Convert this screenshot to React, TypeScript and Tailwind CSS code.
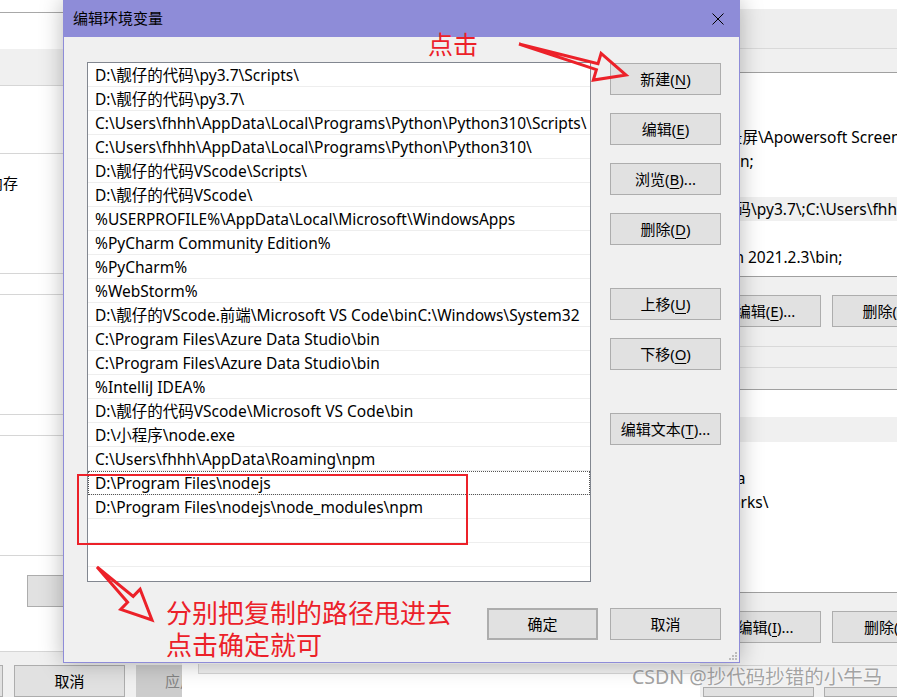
import React from "react";

const paths: string[] = [
  "D:\\靓仔的代码\\py3.7\\Scripts\\",
  "D:\\靓仔的代码\\py3.7\\",
  "C:\\Users\\fhhh\\AppData\\Local\\Programs\\Python\\Python310\\Scripts\\",
  "C:\\Users\\fhhh\\AppData\\Local\\Programs\\Python\\Python310\\",
  "D:\\靓仔的代码VScode\\Scripts\\",
  "D:\\靓仔的代码VScode\\",
  "%USERPROFILE%\\AppData\\Local\\Microsoft\\WindowsApps",
  "%PyCharm Community Edition%",
  "%PyCharm%",
  "%WebStorm%",
  "D:\\靓仔的VScode.前端\\Microsoft VS Code\\binC:\\Windows\\System32",
  "C:\\Program Files\\Azure Data Studio\\bin",
  "C:\\Program Files\\Azure Data Studio\\bin",
  "%IntelliJ IDEA%",
  "D:\\靓仔的代码VScode\\Microsoft VS Code\\bin",
  "D:\\小程序\\node.exe",
  "C:\\Users\\fhhh\\AppData\\Roaming\\npm",
  "D:\\Program Files\\nodejs",
  "D:\\Program Files\\nodejs\\node_modules\\npm",
  "",
  "",
];

function Btn({
  children,
  className = "",
}: {
  children: React.ReactNode;
  className?: string;
}) {
  return (
    <div
      className={`flex h-[32px] w-[111px] shrink-0 items-center justify-center border border-[#adadad] bg-[#e1e1e1] text-[15px] text-black ${className}`}
    >
      {children}
    </div>
  );
}

const U = ({ c }: { c: string }) => (
  <span className="underline underline-offset-[3px]">{c}</span>
);

export default function App() {
  return (
    <div className="relative h-[697px] w-[897px] overflow-hidden bg-white font-[family-name:'Noto_Sans','Noto_Sans_CJK_SC',sans-serif] text-black">
      {/* left window behind */}
      <div className="absolute left-0 top-0 flex h-[697px] w-[182px] flex-col overflow-hidden">
        <div className="h-[12px] bg-white" />
        <div className="h-[37px] border-t border-[#a8a8a8] bg-white" />
        <div className="h-[38px] border-b border-[#d6d6d6] bg-[#f0f0f0]" />
        <div className="h-[68px] border-b border-[#d6d6d6] bg-white" />
        <div className="h-[121px] border-b border-[#d6d6d6] bg-white">
          <div className="-ml-[42px] mt-[18px] whitespace-nowrap text-[15px] leading-[22px]">
            虚拟内存
          </div>
        </div>
        <div className="h-[21px] border-b border-[#d6d6d6] bg-white" />
        <div className="h-[121px] border-b border-[#d6d6d6] bg-white" />
        <div className="h-[21px] border-b border-[#d6d6d6] bg-white" />
        <div className="h-[121px] border-b border-[#d6d6d6] bg-white" />
        <div className="h-[95px] bg-white pl-[27px] pt-[19px]">
          <div className="h-[32px] w-[111px] border border-[#adadad] bg-[#e1e1e1]" />
        </div>
        <div className="flex flex-1 items-start gap-[11px] border-t border-[#d6d6d6] bg-[#f0f0f0] pt-[13px]">
          <div className="h-[32px] w-[3px] shrink-0 border border-l-0 border-[#adadad] bg-[#e1e1e1]" />
          <div className="flex h-[32px] w-[111px] shrink-0 items-center justify-center border border-[#adadad] bg-[#e1e1e1] text-[15px]">
            取消
          </div>
          <div className="flex h-[32px] w-[111px] shrink-0 items-center justify-start whitespace-nowrap border border-[#cccccc] bg-[#cccccc] pl-[28px] text-[15px] text-[#838383]">
            应用
          </div>
        </div>
      </div>

      {/* right window behind */}
      <div className="absolute left-[182px] top-[662px] h-[35px] w-[560px] bg-white">
        <div className="ml-[16px] mt-[2px] h-[10px] border-b border-l border-[#d6d6d6] bg-[#f0f0f0]" />
      </div>
      <div className="absolute left-[700px] top-[9px] flex h-[688px] w-[197px] flex-col overflow-hidden bg-[#f0f0f0]">
        <div className="h-[41px] border-b border-[#d9d9d9] bg-[#eeeeee]" />
        <div className="h-[23px] bg-[#f0f0f0]" />
        <div className="flex h-[208px] flex-col border-y border-[#a0a0a0] bg-white pt-[52px] text-[15.5px] leading-[24px] whitespace-nowrap">
          <div className="pl-[27px]">录屏\Apowersoft Screen Recorder</div>
          <div className="pl-[36px]">in;</div>
          <div className="h-[24px]" />
          <div className="bg-[#f0f0f0] pl-[20px]">代码\py3.7\;C:\Users\fhhh\AppData</div>
          <div className="h-[24px]" />
          <div className="pl-[21px]">ion 2021.2.3\bin;</div>
        </div>
        <div className="flex gap-[11px] pl-[10px] pt-[18px]">
          <Btn>
            编辑(<U c="E" />)...
          </Btn>
          <Btn>
            删除(<U c="D" />)
          </Btn>
        </div>
        <div className="mt-[19px] h-[22px] border-y border-[#d9d9d9]" />
        <div className="h-[22px] border-b border-[#a0a0a0]" />
        <div className="flex h-[207px] flex-col border-b border-[#a0a0a0] bg-white pt-[27px] text-[15.5px] leading-[24px] whitespace-nowrap">
          <div className="h-[25px] bg-[#f0f0f0]" />
          <div className="h-[24px]" />
          <div className="pl-[16px]">Java</div>
          <div className="pl-[19px]">works\</div>
        </div>
        <div className="flex gap-[11px] pl-[10px] pt-[18px]">
          <Btn>
            编辑(<U c="I" />)...
          </Btn>
          <Btn>
            删除(<U c="L" />)
          </Btn>
        </div>
        <div className="mt-[22px] h-[22px] border-t border-[#d0d0d0]" />
        <div className="flex gap-[10px] pl-[3px]">
          <div className="h-[10px] w-[111px] shrink-0 border border-[#adadad] bg-[#e1e1e1]" />
          <div className="h-[10px] w-[111px] shrink-0 border border-[#adadad] bg-[#e1e1e1]" />
        </div>
      </div>

      {/* watermark */}
      <div className="absolute left-[632px] top-[664px] whitespace-nowrap text-[19.5px] leading-[26px] text-[#a3a3a3] [text-shadow:0_0_2px_#ffffff,0_0_1px_#ffffff]">
        CSDN @抄代码抄错的小牛马
      </div>

      {/* dialog */}
      <div className="absolute left-[63px] top-0 flex h-[663px] w-[677px] flex-col border border-t-0 border-[#8e8cd8] bg-[#f0f0f0] shadow-[0_0_22px_rgba(0,0,0,0.28)]">
        <div className="flex h-[37px] shrink-0 items-center justify-between bg-[#8e8cd8] pl-[9px] pr-[15px]">
          <span className="text-[15px]">编辑环境变量</span>
          <svg width="12" height="12" viewBox="0 0 12 12">
            <path d="M0.5 0.5 L11.5 11.5 M11.5 0.5 L0.5 11.5" stroke="#000" strokeWidth="1" />
          </svg>
        </div>
        <div className="relative flex flex-1 flex-col pl-[23px] pr-[18px] pt-[25px]">
          <div className="flex items-start gap-[19px]">
            <div className="flex h-[520px] w-[504px] flex-col overflow-hidden border border-[#828790] bg-white">
              {paths.map((p, i) => (
                <div
                  key={i}
                  className={`h-[24px] shrink-0 whitespace-nowrap border-b border-[#eeeeee] pl-[7px] text-[15.5px] leading-[25px] ${
                    i === 17 ? "outline-1 -outline-offset-1 outline-dotted outline-[#555]" : ""
                  }`}
                >
                  {p}
                </div>
              ))}
            </div>
            <div className="flex flex-col gap-[18px] pt-[1px]">
              <Btn>
                新建(<U c="N" />)
              </Btn>
              <Btn>
                编辑(<U c="E" />)
              </Btn>
              <Btn>
                浏览(<U c="B" />)...
              </Btn>
              <Btn>
                删除(<U c="D" />)
              </Btn>
              <Btn className="mt-[25px]">
                上移(<U c="U" />)
              </Btn>
              <Btn>
                下移(<U c="O" />)
              </Btn>
              <Btn className="mt-[25px]">
                编辑文本(<U c="T" />)...
              </Btn>
            </div>
          </div>
          <div className="mt-[26px] flex justify-end gap-[12px]">
            <Btn className="border-2 border-[#0078d7]">确定</Btn>
            <Btn>取消</Btn>
          </div>
          <svg
            className="absolute bottom-[1px] right-[1px]"
            width="10"
            height="10"
            viewBox="0 0 10 10"
          >
            <rect x="7" y="1" width="2" height="2" fill="#bcbcbc" />
            <rect x="4" y="4" width="2" height="2" fill="#bcbcbc" />
            <rect x="7" y="4" width="2" height="2" fill="#bcbcbc" />
            <rect x="1" y="7" width="2" height="2" fill="#bcbcbc" />
            <rect x="4" y="7" width="2" height="2" fill="#bcbcbc" />
            <rect x="7" y="7" width="2" height="2" fill="#bcbcbc" />
          </svg>
        </div>
      </div>

      {/* annotations */}
      <div className="absolute left-[428px] top-[27px] font-[family-name:'Noto_Sans_CJK_SC',sans-serif] text-[25px] leading-[32px] text-[#ec2129]">
        点击
      </div>
      <div className="absolute left-[77px] top-[474px] h-[71px] w-[391px] border-2 border-[#ec2129]" />
      <div className="absolute left-[166px] top-[596px] whitespace-nowrap font-[family-name:'Noto_Sans_CJK_SC',sans-serif] text-[26px] leading-[32px] text-[#ec2129]">
        <div>分别把复制的路径甩进去</div>
        <div>点击确定就可</div>
      </div>
      <svg className="pointer-events-none absolute left-0 top-0" width="897" height="697">
        <polygon
          points="519,44 598,63.8 601.1,53.3 626,75 593.3,80.1 596.4,69.6"
          fill="none"
          stroke="#ec2129"
          strokeWidth="3"
          strokeLinejoin="miter"
        />
        <polygon
          points="97,567 133.2,596.4 140.1,589.2 152,620 120.7,609.4 127.6,602.2"
          fill="none"
          stroke="#ec2129"
          strokeWidth="3"
          strokeLinejoin="miter"
        />
      </svg>
    </div>
  );
}
